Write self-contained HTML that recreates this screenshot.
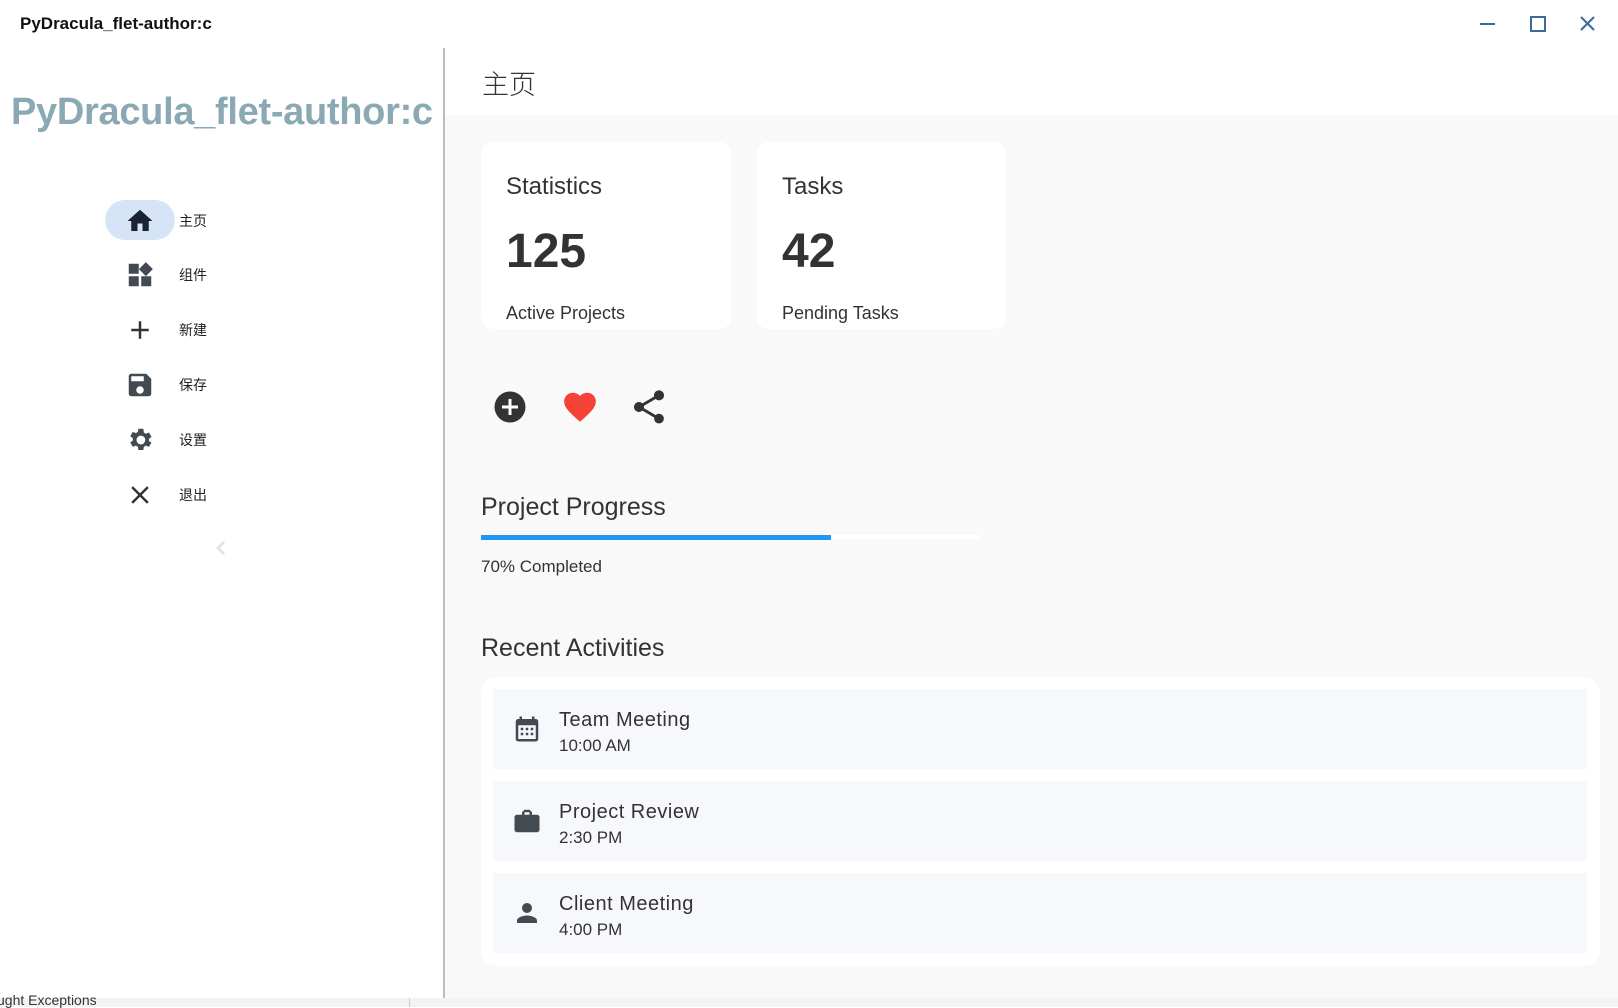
<!DOCTYPE html>
<html><head><meta charset="utf-8"><style>
*{margin:0;padding:0;box-sizing:border-box}
body{width:1618px;height:1007px;position:relative;background:#fff;font-family:"Liberation Sans","DejaVu Sans","Noto Sans CJK SC",sans-serif;color:#333;overflow:hidden}
.a{position:absolute;white-space:nowrap}
.card{position:absolute;background:#fff;border-radius:12px}
.item{position:absolute;left:493px;width:1094px;height:80px;background:#f7f8fc}
.item .t{position:absolute;left:66px;top:20px;font-size:20px;color:#333;letter-spacing:.5px}
.item .s{position:absolute;left:66px;top:47px;font-size:17px;color:#333}
.item svg{position:absolute;left:19px;top:25px}
.nav{position:absolute;left:179px;font-size:14px;color:#222;font-family:"Noto Sans CJK SC",sans-serif}
.ni{position:absolute;left:125px}
</style></head><body>
<div class="a" style="left:20px;top:14px;font-size:17px;font-weight:bold;color:#111">PyDracula_flet-author:c</div>
<svg class="a" style="left:1470px;top:10px" width="140" height="30">
<g stroke="#3d6a9a" stroke-width="2" fill="none">
<line x1="10" y1="14" x2="25" y2="14"/>
<rect x="61" y="7" width="14" height="14"/>
<line x1="111" y1="7" x2="124" y2="20"/><line x1="124" y1="7" x2="111" y2="20"/>
</g></svg>
<div class="a" style="left:0;top:48px;width:443px;height:950px;background:#fff"></div>
<div class="a" style="left:443px;top:48px;width:2px;height:950px;background:#b8bec4"></div>
<div class="a" style="left:11px;top:91px;font-size:38px;font-weight:bold;color:#8aa9b4;letter-spacing:-0.3px">PyDracula_flet-author:c</div>

<div class="a" style="left:105px;top:200px;width:70px;height:40px;border-radius:20px;background:#d6e4f7"></div>
<svg class="ni" style="top:206px" width="30" height="30" viewBox="0 0 24 24"><path d="M10 20v-6h4v6h5v-8h3L12 3 2 12h3v8z" fill="#1b2333"/></svg>
<div class="nav" style="top:211px">主页</div>
<svg class="ni" style="top:260px" width="30" height="30" viewBox="0 0 24 24"><path d="M3 3h8v8H3zM3 13h8v8H3zM13 13h8v8h-8zM16.7 1.7l5.6 5.6-5.6 5.6-5.6-5.6z" fill="#444a52"/></svg>
<div class="nav" style="top:265px">组件</div>
<svg class="ni" style="top:315px" width="30" height="30" viewBox="0 0 24 24"><path d="M19 13h-6v6h-2v-6H5v-2h6V5h2v6h6z" fill="#333"/></svg>
<div class="nav" style="top:320px">新建</div>
<svg class="ni" style="top:370px" width="30" height="30" viewBox="0 0 24 24"><path d="M17 3H5a2 2 0 0 0-2 2v14a2 2 0 0 0 2 2h14a2 2 0 0 0 2-2V7zm-5 16a3 3 0 1 1 0-6 3 3 0 0 1 0 6zm3-10H5V5h10z" fill="#444a52"/></svg>
<div class="nav" style="top:375px">保存</div>
<svg class="ni" style="top:425px" width="30" height="30" viewBox="0 0 24 24"><path d="M19.1 12.9a7 7 0 0 0 0-1.8l2.1-1.6-2-3.5-2.5 1a7 7 0 0 0-1.6-.9L14.7 3h-4l-.4 2.6a7 7 0 0 0-1.6.9l-2.5-1-2 3.5 2.1 1.6a7 7 0 0 0 0 1.8l-2.1 1.6 2 3.5 2.5-1a7 7 0 0 0 1.6.9l.4 2.6h4l.4-2.6a7 7 0 0 0 1.6-.9l2.5 1 2-3.5zM12.7 15.5a3.5 3.5 0 1 1 0-7 3.5 3.5 0 0 1 0 7z" fill="#444a52"/></svg>
<div class="nav" style="top:430px">设置</div>
<svg class="ni" style="top:480px" width="30" height="30" viewBox="0 0 24 24"><path d="M19 6.4 17.6 5 12 10.6 6.4 5 5 6.4 10.6 12 5 17.6 6.4 19 12 13.4 17.6 19 19 17.6 13.4 12z" fill="#333"/></svg>
<div class="nav" style="top:485px">退出</div>
<svg class="a" style="left:214px;top:540px" width="14" height="16"><path d="M10 2 4 8l6 6" stroke="#e4e4e4" stroke-width="3" fill="none"/></svg>

<div class="a" style="left:445px;top:48px;width:1173px;height:67px;background:#fff"></div>
<div class="a" style="left:445px;top:115px;width:1173px;height:883px;background:#f9f9f9"></div>
<div class="a" style="left:482px;top:63px;font-size:27px;color:#333;font-family:'Noto Sans CJK SC',sans-serif;font-weight:300">主页</div>

<div class="card" style="left:481px;top:142px;width:250px;height:187px">
<div class="a" style="left:25px;top:31px;font-size:24px">Statistics</div>
<div class="a" style="left:25px;top:82px;font-size:48px;font-weight:bold">125</div>
<div class="a" style="left:25px;top:161px;font-size:18px">Active Projects</div></div>
<div class="card" style="left:757px;top:142px;width:249px;height:187px">
<div class="a" style="left:25px;top:31px;font-size:24px">Tasks</div>
<div class="a" style="left:25px;top:82px;font-size:48px;font-weight:bold">42</div>
<div class="a" style="left:25px;top:161px;font-size:18px">Pending Tasks</div></div>

<svg class="a" style="left:494px;top:391px" width="32" height="32" viewBox="0 0 32 32"><circle cx="16" cy="16" r="15.5" fill="#333"/><path d="M14.5 8h3v6.5H24v3h-6.5V24h-3v-6.5H8v-3h6.5z" fill="#fff"/></svg>
<svg class="a" style="left:560px;top:388px" width="40" height="38" viewBox="0 0 24 24"><path d="M12 21.35 10.55 20C5.4 15.36 2 12.28 2 8.5 2 5.42 4.42 3 7.5 3c1.74 0 3.41.81 4.5 2.09C13.09 3.81 14.76 3 16.5 3 19.58 3 22 5.42 22 8.5c0 3.78-3.4 6.86-8.55 11.54z" fill="#f44336"/></svg>
<svg class="a" style="left:629px;top:387px" width="40" height="40" viewBox="0 0 24 24"><path d="M18 16.08c-.76 0-1.44.3-1.96.77L8.91 12.7c.05-.23.09-.46.09-.7s-.04-.47-.09-.7l7.05-4.11A2.99 2.99 0 0 0 21 5a3 3 0 1 0-5.91.7L8.04 9.81A3 3 0 1 0 6 15a3 3 0 0 0 2.04-.81l7.12 4.16c-.05.21-.08.43-.08.65A2.92 2.92 0 1 0 18 16.08z" fill="#333"/></svg>

<div class="a" style="left:481px;top:493px;font-size:25px">Project Progress</div>
<div class="a" style="left:481px;top:535px;width:500px;height:4px;background:#fff"></div>
<div class="a" style="left:481px;top:535px;width:350px;height:5px;background:#2196f3"></div>
<div class="a" style="left:481px;top:557px;font-size:17px">70% Completed</div>
<div class="a" style="left:481px;top:634px;font-size:25px">Recent Activities</div>

<div class="card" style="left:481px;top:677px;width:1119px;height:289px;border-radius:16px"></div>
<div class="item" style="top:689px"><svg width="30" height="30" viewBox="0 0 24 24"><path d="M19 4h-1V2h-2v2H8V2H6v2H5a2 2 0 0 0-2 2v14a2 2 0 0 0 2 2h14a2 2 0 0 0 2-2V6a2 2 0 0 0-2-2zm0 16H5V9h14zM7 11h2v2H7zm4 0h2v2h-2zm4 0h2v2h-2zM7 15h2v2H7zm4 0h2v2h-2zm4 0h2v2h-2z" fill="#444a52"/></svg><div class="t">Team Meeting</div><div class="s">10:00 AM</div></div>
<div class="item" style="top:781px"><svg width="30" height="30" viewBox="0 0 24 24"><path d="M20 7h-4V5l-2-2h-4L8 5v2H4a2 2 0 0 0-2 2v10a2 2 0 0 0 2 2h16a2 2 0 0 0 2-2V9a2 2 0 0 0-2-2zm-6 0h-4V5h4z" fill="#444a52"/></svg><div class="t">Project Review</div><div class="s">2:30 PM</div></div>
<div class="item" style="top:873px"><svg width="30" height="30" viewBox="0 0 24 24"><path d="M12 12a4 4 0 1 0 0-8 4 4 0 0 0 0 8zm0 2c-2.67 0-8 1.34-8 4v2h16v-2c0-2.66-5.33-4-8-4z" fill="#444a52"/></svg><div class="t">Client Meeting</div><div class="s">4:00 PM</div></div>

<div class="a" style="left:0;top:998px;width:1618px;height:9px;background:#f3f3f3"></div>
<div class="a" style="left:-3px;top:992px;font-size:14px;color:#333">ught Exceptions</div>
<div class="a" style="left:409px;top:998px;width:1px;height:9px;background:#ccc"></div>
</body></html>
